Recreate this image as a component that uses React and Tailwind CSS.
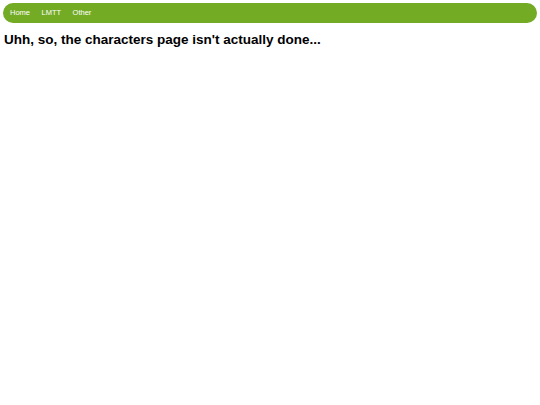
export default function App() {
    return (
        <div className="min-h-screen bg-white" style={{ fontFamily: '"Liberation Sans", Arial, sans-serif' }}>
            {/* NAV */}
            <nav className="m-[3px] h-5 rounded-full bg-[#73ab24] flex items-center gap-[11.5px] pl-[7px] text-[7.5px] text-white">
                <a href="#">Home</a>
                <a href="#">LMTT</a>
                <a href="#">Other</a>
            </nav>

            <h1 className="mt-[7px] ml-[4px] text-[13.5px] leading-[20px] font-bold text-black">
                Uhh, so, the characters page isn't actually done...
            </h1>
        </div>
    );
}
